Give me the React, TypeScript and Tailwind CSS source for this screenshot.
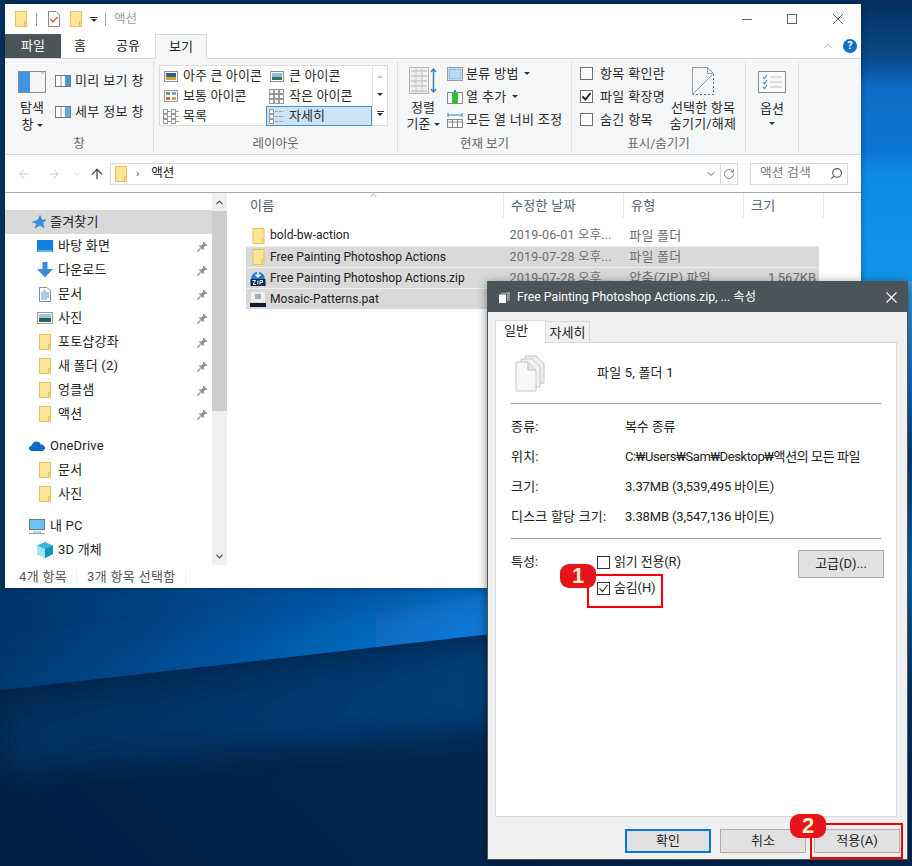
import { ChevronDown, ChevronUp, ArrowLeft, ArrowRight, ArrowUp, RotateCw, Search } from 'lucide-react';

function Wallpaper() {
  return (
    <svg className="absolute inset-0" width="912" height="866" viewBox="0 0 912 866">
      <defs>
        <linearGradient id="base" x1="0" y1="1" x2="1" y2="0">
          <stop offset="0" stopColor="#001f42" />
          <stop offset="0.6" stopColor="#002d5b" />
          <stop offset="1" stopColor="#01325f" />
        </linearGradient>
        <linearGradient id="sky" x1="0" y1="0" x2="1" y2="0">
          <stop offset="0" stopColor="#00346a" />
          <stop offset="0.3" stopColor="#004d96" />
          <stop offset="0.55" stopColor="#0560b4" />
          <stop offset="1" stopColor="#0a78d2" />
        </linearGradient>
        <linearGradient id="beam" x1="0" y1="0" x2="1" y2="0">
          <stop offset="0" stopColor="#003a72" />
          <stop offset="0.25" stopColor="#0053a0" />
          <stop offset="0.5" stopColor="#0a78d4" />
          <stop offset="1" stopColor="#0a86dc" />
        </linearGradient>
        <linearGradient id="right" x1="0" y1="0" x2="0" y2="1">
          <stop offset="0" stopColor="#032f5c" />
          <stop offset="0.2" stopColor="#0a4a8c" />
          <stop offset="0.29" stopColor="#0b6cc4" />
          <stop offset="0.5" stopColor="#0b76d2" />
          <stop offset="0.58" stopColor="#0d8ce6" />
          <stop offset="1" stopColor="#1494ea" />
        </linearGradient>
        <linearGradient id="edge" x1="0" y1="0" x2="0" y2="1">
          <stop offset="0" stopColor="#3aa0e0" />
          <stop offset="0.2" stopColor="#0a6ac0" />
          <stop offset="0.3" stopColor="#00407c" />
          <stop offset="0.5" stopColor="#0a6ab4" />
          <stop offset="0.72" stopColor="#00305f" />
          <stop offset="1" stopColor="#002a55" />
        </linearGradient>
        <linearGradient id="lower" x1="0" y1="0" x2="1" y2="0.3">
          <stop offset="0" stopColor="#00264e" />
          <stop offset="0.6" stopColor="#003c74" />
          <stop offset="1" stopColor="#004482" />
        </linearGradient>
        <clipPath id="above"><polygon points="0,0 912,0 912,566 490,634 0,690" /></clipPath>
        <filter id="softer"><feGaussianBlur stdDeviation="14" /></filter>
        <filter id="glow"><feGaussianBlur stdDeviation="16" /></filter>
      </defs>
      <rect width="912" height="866" fill="url(#base)" />
      <polygon points="0,700 490,640 912,580 912,690 0,770" fill="url(#lower)" filter="url(#softer)" />
      <g clipPath="url(#above)">
        <rect x="0" y="300" width="912" height="420" fill="url(#sky)" />
        <polygon points="0,725 0,665 420,605 912,535 912,600 490,668" fill="url(#beam)" filter="url(#glow)" />
      </g>
      <rect x="861" y="0" width="51" height="300" fill="url(#right)" />
      <rect x="908" y="281" width="4" height="585" fill="url(#edge)" />
      <rect x="0" y="0" width="912" height="4" fill="#03305c" />
      <rect x="0" y="0" width="5" height="590" fill="#03335f" />
    </svg>
  );
}

function Folder({ className = 'w-[12px] h-[16px]' }: { className?: string }) {
  return (
    <svg className={className} viewBox="0 0 12 16">
      <rect x="0.5" y="0.5" width="11" height="15" fill="#ffe596" stroke="#e6c25f" />
      <path d="M9.5 15.5V10.5H11.5" fill="#f8d774" stroke="#e6c25f" />
    </svg>
  );
}

function Pin() {
  return (
    <svg className="w-[11px] h-[11px]" viewBox="0 0 11 11">
      <path d="M6.5 0.5L10.5 4.5L9.5 5L8.5 4.7L6.6 6.6L6.6 8.4L5.8 9L2 5.2L2.6 4.4L4.4 4.4L6.3 2.5L6 1.5Z" fill="#8d8f91" />
      <path d="M3.5 7.5L0.5 10.5" stroke="#8d8f91" strokeWidth="1.2" />
    </svg>
  );
}

function MiniIcon({ kind }: { kind: string }) {
  if (kind === 'picture' || kind === 'xl') {
    return (
      <svg className="w-[14px] h-[11px]" viewBox="0 0 14 11">
        <rect x="0.5" y="0.5" width="13" height="10" fill="#fff" stroke="#8e8e8e" />
        <rect x="2" y="2" width="10" height="7" fill={kind === 'xl' ? '#2d5f9a' : '#8fbdd8'} />
        <rect x="2" y="6" width="10" height="3" fill={kind === 'xl' ? '#d9a520' : '#3c6b5c'} />
      </svg>
    );
  }
  if (kind === 'medium') {
    return (
      <svg className="w-[14px] h-[12px]" viewBox="0 0 14 12">
        <rect x="0.5" y="0.5" width="13" height="11" fill="#fff" stroke="#9a9a9a" />
        <rect x="2" y="2" width="4" height="3" fill="#6f9a70" />
        <rect x="8" y="2" width="4" height="3" fill="#7aa3c9" />
        <rect x="2" y="7" width="4" height="3" fill="#c96a4a" />
        <rect x="8" y="7" width="4" height="3" fill="#c9a84a" />
      </svg>
    );
  }
  const dots = kind === 'small'
    ? [0, 1, 2].flatMap((r) => [0, 1, 2].map((c) => [c * 5 + 1, r * 5 + 1]))
    : kind === 'list'
      ? [0, 1, 2].flatMap((r) => [0, 1].map((c) => [c * 8 + 1, r * 5 + 1]))
      : [0, 1, 2].map((r) => [1, r * 5 + 1]);
  return (
    <svg className="w-[16px] h-[15px]" viewBox="0 0 16 15">
      {dots.map(([x, y], i) => (
        <g key={i}>
          <rect x={x - 0.5} y={y - 0.5} width="4" height="4" fill="#fff" stroke="#9a9a9a" />
          {kind === 'list' && <path d={`M${x + 4} ${y + 1.5}h3`} stroke="#9a9a9a" />}
        </g>
      ))}
      {kind === 'detail' && [1, 6, 11].map((y) => <path key={y} d={`M6 ${y + 1.5}h9`} stroke="#9a9a9a" strokeDasharray="3 1" />)}
    </svg>
  );
}

function Caret({ className = '' }: { className?: string }) {
  return <span className={`inline-block w-0 h-0 border-x-[3px] border-x-transparent border-t-[3px] border-t-[#333] align-middle ${className}`} />;
}

function GroupLabel({ children }: { children: string }) {
  return <div className="absolute bottom-[-1px] left-0 right-0 text-center text-[12.5px] leading-[18px] text-[#666]">{children}</div>;
}

function Gallery({ icon, label, selected }: { icon: string; label: string; selected?: boolean }) {
  return (
    <div className={`w-[106px] h-[20px] flex items-center pl-[2px] gap-[4px] border whitespace-nowrap ${selected ? 'bg-[#cce4f7] border-[#4a90c8]' : 'border-transparent'}`}>
      <span className="w-[16px] flex justify-center"><MiniIcon kind={icon} /></span>
      <span className="tracking-[0.1px]">{label}</span>
    </div>
  );
}

function RibbonCheck({ label, checked }: { label: string; checked?: boolean }) {
  return (
    <div className="flex items-center h-[23px] gap-[7px]">
      <span className="w-[13px] h-[13px] border border-[#707070] bg-white flex items-center justify-center">
        {checked && (
          <svg className="w-[11px] h-[11px]" viewBox="0 0 11 11"><path d="M1.5 5.5L4.5 8.5L9.5 2" fill="none" stroke="#222" strokeWidth="2" /></svg>
        )}
      </span>
      <span className="tracking-[0.35px]">{label}</span>
    </div>
  );
}

function Ribbon() {
  return (
    <div className="h-[97px] bg-[#f5f6f7] border-y border-[#dadbdc] flex text-[13px] leading-[18px] text-[#2b2b2b]">
      <div className="relative w-[149px] border-r border-[#e2e3e4] my-[2px] flex pl-[12px] pt-[10px]">
        <div className="w-[30px] flex flex-col items-center">
          <svg className="w-[28px] h-[22px]" viewBox="0 0 28 22">
            <rect x="0.5" y="0.5" width="27" height="21" fill="#f4f4f4" stroke="#8c8c8c" />
            <rect x="1" y="1" width="11" height="20" fill="#3f93e0" />
            <path d="M23 2h3" stroke="#aaa" />
          </svg>
          <div className="mt-[6px] text-center leading-[17px] whitespace-nowrap">탐색<br />창 <Caret /></div>
        </div>
        <div className="ml-[8px] flex flex-col gap-[12px]">
          {['미리 보기 창', '세부 정보 창'].map((t, i) => (
            <div key={t} className="flex items-center gap-[4px] h-[19px]">
              <svg className="w-[16px] h-[12px]" viewBox="0 0 16 12">
                <rect x="0.5" y="0.5" width="15" height="11" fill="#fff" stroke="#777" />
                <path d="M6 1v10" stroke="#999" />
                <rect x="10" y="1" width="5" height="10" fill={i === 0 ? '#4a97de' : '#6aa9e0'} />
              </svg>
              <span className="tracking-[0.35px]">{t}</span>
            </div>
          ))}
        </div>
        <GroupLabel>창</GroupLabel>
      </div>
      <div className="relative w-[244px] border-r border-[#e2e3e4] my-[2px] pl-[5px] pt-[4px]">
        <div className="w-[229px] h-[61px] border border-[#dcdcdc] bg-white flex">
          <div className="grid grid-cols-[106px_106px] grid-rows-[20px_20px_20px]">
            <Gallery icon="xl" label="아주 큰 아이콘" />
            <Gallery icon="picture" label="큰 아이콘" />
            <Gallery icon="medium" label="보통 아이콘" />
            <Gallery icon="small" label="작은 아이콘" />
            <Gallery icon="list" label="목록" />
            <Gallery icon="detail" label="자세히" selected />
          </div>
          <div className="flex-1 border-l border-[#e6e6e6] flex flex-col items-center justify-around py-[2px]">
            <Caret className="rotate-180 opacity-30" />
            <Caret />
            <span className="flex flex-col items-center gap-[1px]"><span className="w-[7px] h-px bg-[#333]" /><Caret /></span>
          </div>
        </div>
        <GroupLabel>레이아웃</GroupLabel>
      </div>
      <div className="relative w-[174px] border-r border-[#e2e3e4] my-[2px] flex pl-[11px] pt-[6px]">
        <div className="w-[28px] flex flex-col items-center">
          <svg className="w-[28px] h-[28px] shrink-0" viewBox="0 0 28 28">
            <rect x="0.5" y="0.5" width="19" height="26" fill="#f1f1f1" stroke="#b5b5b5" />
            {[4, 9, 14, 19, 24].map((y) => <path key={y} d={`M2 ${y}h16`} stroke="#b0b0b0" />)}
            <path d="M7 1v25M13 1v25" stroke="#c9c9c9" />
            <path d="M24.5 2v23M22 5l2.5-3 2.5 3M22 22l2.5 3 2.5-3" fill="none" stroke="#2f80c8" strokeWidth="1.4" />
          </svg>
          <div className="mt-[5px] text-center leading-[16px] whitespace-nowrap">정렬<br />기준 <Caret /></div>
        </div>
        <div className="ml-[10px] mt-[-5px] flex flex-col">
          <div className="flex items-center h-[23px] gap-[3px] whitespace-nowrap">
            <svg className="w-[16px] h-[14px]" viewBox="0 0 16 14"><rect x="0.5" y="0.5" width="15" height="13" fill="#fff" stroke="#999" /><rect x="2" y="2" width="12" height="10" fill="#b6d9f5" stroke="#7fb2dc" /></svg>
            <span className="tracking-[0.35px]">분류 방법</span><Caret className="ml-[2px]" />
          </div>
          <div className="flex items-center h-[23px] gap-[3px] whitespace-nowrap">
            <svg className="w-[16px] h-[14px]" viewBox="0 0 16 14"><rect x="0.5" y="2.5" width="15" height="11" fill="#fff" stroke="#888" /><rect x="5" y="3" width="6" height="10" fill="#2bc232" /><path d="M8 0v2" stroke="#2f80c8" strokeWidth="2" /></svg>
            <span className="tracking-[0.35px]">열 추가</span><Caret className="ml-[2px]" />
          </div>
          <div className="flex items-center h-[23px] gap-[3px] whitespace-nowrap">
            <svg className="w-[16px] h-[16px]" viewBox="0 0 16 16"><path d="M1 3h14M1 1v4M15 1v4" fill="none" stroke="#2f80c8" /><rect x="0.5" y="7.5" width="15" height="8" fill="#fff" stroke="#888" /><path d="M0 10h16M5.5 8v7M10.5 8v7" stroke="#888" /></svg>
            <span className="tracking-[0.3px]">모든 열 너비 조정</span>
          </div>
        </div>
        <GroupLabel>현재 보기</GroupLabel>
      </div>
      <div className="relative w-[174px] border-r border-[#e2e3e4] my-[2px] flex pl-[8px] pt-[1px]">
        <div className="flex flex-col">
          <RibbonCheck label="항목 확인란" />
          <RibbonCheck label="파일 확장명" checked />
          <RibbonCheck label="숨긴 항목" />
        </div>
        <div className="absolute left-[98px] top-[6px] w-[66px] flex flex-col items-center">
          <svg className="w-[22px] h-[28px] shrink-0" viewBox="0 0 22 28">
            <path d="M0.5 27.5V0.5H15.5L21.5 6.5" fill="none" stroke="#9a9a9a" />
            <path d="M15.5 0.5V6.5H21.5" fill="none" stroke="#9a9a9a" />
            <path d="M0.5 27.5L20 8" stroke="#9a9a9a" />
            <path d="M21.5 7V27.5H1" fill="none" stroke="#2f80c8" strokeDasharray="2 2" />
          </svg>
          <div className="mt-[5px] text-center leading-[16px] whitespace-nowrap tracking-[0.2px]">선택한 항목<br />숨기기/해제</div>
        </div>
        <GroupLabel>표시/숨기기</GroupLabel>
      </div>
      <div className="relative w-[53px] border-r border-[#e2e3e4] my-[2px] flex flex-col items-center pt-[10px]">
        <svg className="w-[28px] h-[22px] shrink-0" viewBox="0 0 28 22">
          <rect x="0.5" y="0.5" width="27" height="21" fill="#fafafa" stroke="#8c8c8c" />
          {[6, 11, 16].map((y) => (
            <g key={y}>
              <path d={`M5 ${y}l1.5 1.5L9 ${y - 2}`} fill="none" stroke="#3a8fd8" strokeWidth="1.2" />
              <path d={`M12 ${y}h12`} stroke="#bbb" />
            </g>
          ))}
        </svg>
        <div className="mt-[7px] leading-[17px]">옵션</div>
        <Caret className="mt-[5px]" />
      </div>
    </div>
  );
}

const favorites = ['포토샵강좌', '새 폴더 (2)', '엉클샘', '액션'];

function NavRow({ icon, label, pin, indent = true, selected }: { icon: React.ReactNode; label: string; pin?: boolean; indent?: boolean; selected?: boolean }) {
  return (
    <div className={`h-[24px] flex items-center ${indent ? 'pl-[32px]' : 'pl-[24px]'} pr-[4px] ${selected ? 'bg-[#d9d9d9]' : ''}`}>
      <span className="w-[16px] h-[16px] flex items-center justify-center shrink-0">{icon}</span>
      <span className="ml-[5px] flex-1 tracking-[0.2px] whitespace-nowrap">{label}</span>
      {pin && <Pin />}
    </div>
  );
}

function Sidebar() {
  return (
    <div className="w-[207px] pt-[17px] text-[13px] text-[#222]">
      <NavRow
        indent={false}
        selected
        label="즐겨찾기"
        icon={
          <svg className="w-[14px] h-[14px] ml-[4px] shrink-0" viewBox="0 0 14 14"><path d="M8 0.5L9.8 5H14L10.6 7.8L12 13L8 10L3 13L4.8 8.4L0.5 7L5.8 5.2Z" fill="#2f8fe0" stroke="#1b6fb8" strokeWidth="0.5" /></svg>
        }
      />
      <NavRow
        pin
        label="바탕 화면"
        icon={<svg className="w-[16px] h-[12px]" viewBox="0 0 16 12"><rect width="16" height="12" fill="#0f7fe0" /><path d="M1 11h14" stroke="#bfe0f8" /></svg>}
      />
      <NavRow
        pin
        label="다운로드"
        icon={<svg className="w-[16px] h-[16px]" viewBox="0 0 16 16"><path d="M5.5 0h5v7H16L8 15.5L0 7h5.5Z" fill="#3a8bdc" /></svg>}
      />
      <NavRow
        pin
        label="문서"
        icon={<svg className="w-[12px] h-[15px]" viewBox="0 0 12 15"><path d="M0.5 0.5H8L11.5 4V14.5H0.5Z" fill="#fff" stroke="#8a8a8a" /><path d="M2 6h8M2 8h8M2 10h8M2 12h6M4 4h3" stroke="#4a9ad6" /></svg>}
      />
      <NavRow
        pin
        label="사진"
        icon={<svg className="w-[16px] h-[12px]" viewBox="0 0 16 12"><rect x="0.5" y="0.5" width="15" height="11" fill="#fff" stroke="#999" /><rect x="2" y="2" width="12" height="4" fill="#9cc6dc" /><rect x="2" y="6" width="12" height="4" fill="#2f5f58" /></svg>}
      />
      {favorites.map((f) => <NavRow key={f} pin label={f} icon={<Folder />} />)}
      <div className="h-[8px]" />
      <NavRow
        indent={false}
        label="OneDrive"
        icon={<svg className="w-[16px] h-[10px] shrink-0" viewBox="0 0 16 10"><path d="M3 10C1 10 0 8.6 0 7.3C0 5.8 1.2 4.8 2.6 4.7C3.2 2.2 5 0.5 7.5 0.5C9.6 0.5 11.2 1.7 11.8 3.6C14.2 3.6 16 5 16 7C16 8.8 14.7 10 13 10Z" fill="#0f6cc4" /></svg>}
      />
      <NavRow label="문서" icon={<Folder />} />
      <NavRow label="사진" icon={<Folder />} />
      <div className="h-[8px]" />
      <NavRow
        indent={false}
        label="내 PC"
        icon={<svg className="w-[16px] h-[15px] shrink-0" viewBox="0 0 16 15"><rect x="0.5" y="0.5" width="15" height="10" fill="#6cc3f2" stroke="#5a7f9c" /><path d="M4 13h8M0 14.5h16" stroke="#8fa3b2" /></svg>}
      />
      <NavRow
        label="3D 개체"
        icon={<svg className="w-[16px] h-[16px]" viewBox="0 0 16 16"><path d="M8 0L16 3.5V12L8 16L0 12V3.5Z" fill="#37b8d8" /><path d="M8 7L16 3.5V12L8 16Z" fill="#0f93bc" /><path d="M0 3.5L8 7V16L0 12Z" fill="#9ee4f2" /></svg>}
      />
    </div>
  );
}

function FileRow({ icon, name, date, type, size, selected }: { icon: React.ReactNode; name: string; date?: string; type?: string; size?: string; selected?: boolean }) {
  return (
    <div className={`h-[21px] flex items-center ${selected ? 'bg-[#d9d9d9] border-t border-[#efefef]' : ''}`}>
      <span className="w-[16px] ml-[4px] flex justify-center shrink-0">{icon}</span>
      <span className="ml-[4px] w-[240px] whitespace-nowrap text-[12.1px] text-[#222]">{name}</span>
      <span className="w-[120px] whitespace-nowrap text-[#6d6d6d] text-[12.5px] tracking-[0.2px]">{date}</span>
      <span className="w-[120px] whitespace-nowrap text-[#6d6d6d] tracking-[0.2px]">{type}</span>
      <span className="w-[70px] text-right text-[#6d6d6d] pr-[3px]">{size}</span>
    </div>
  );
}

function Header({ label, width, first }: { label: string; width: string; first?: boolean }) {
  return <div className={`${width} h-[25px] border-r border-[#e5e5e5] ${first ? 'pl-[19px]' : 'pl-[7px]'} flex items-center text-[#4c607a] tracking-[0.3px]`}>{label}</div>;
}

function Explorer() {
  return (
    <div className="absolute left-[5px] top-[4px] w-[856px] h-[584px] bg-white flex flex-col shadow-[0_0_6px_rgba(0,0,0,0.35)] text-[13px]">
      <div className="h-[30px] flex items-center shrink-0 relative">
        <Folder className="w-[12px] h-[16px] ml-[10px]" />
        <span className="ml-[9px] w-px h-[13px] bg-[#9a9a9a]" />
        <svg className="ml-[11px] w-[12px] h-[16px]" viewBox="0 0 12 16"><path d="M0.5 0.5H8L11.5 4V15.5H0.5Z" fill="#fff" stroke="#8a8a8a" /><path d="M2.5 8l2.5 3L9.5 6" fill="none" stroke="#d9541e" strokeWidth="1.3" /></svg>
        <Folder className="ml-[10px] w-[12px] h-[16px]" />
        <span className="ml-[8px] flex flex-col items-center gap-[1px]"><span className="w-[7px] h-px bg-[#222]" /><Caret className="border-t-[#222]" /></span>
        <span className="ml-[8px] w-px h-[13px] bg-[#9a9a9a]" />
        <span className="ml-[8px] text-[#a0a0a0] text-[12.5px]">액션</span>
        <div className="ml-auto flex items-center pr-[18px]">
          <svg className="w-[10px] h-[10px] mr-[35px]" viewBox="0 0 10 10"><path d="M0 5.5h10" stroke="#666" /></svg>
          <svg className="w-[10px] h-[10px] mr-[36px]" viewBox="0 0 10 10"><rect x="0.5" y="0.5" width="9" height="9" fill="none" stroke="#666" /></svg>
          <svg className="w-[10px] h-[10px]" viewBox="0 0 10 10"><path d="M0 0L10 10M10 0L0 10" stroke="#666" /></svg>
        </div>
      </div>
      <div className="h-[24px] flex items-stretch shrink-0 relative">
        <div className="w-[56px] bg-[#4b5459] text-white flex items-center justify-center">파일</div>
        <div className="w-[38px] flex items-center justify-center text-[#222]">홈</div>
        <div className="w-[58px] flex items-center justify-center text-[#222]">공유</div>
        <div className="ml-[-2px] w-[52px] h-[25px] bg-[#f5f6f7] border-x border-t border-[#dadbdc] z-10 flex items-center justify-center text-[#222]">보기</div>
        <div className="ml-auto flex items-center pr-[4px] gap-[8px]">
          <ChevronUp size={14} strokeWidth={1.2} className="text-[#888]" />
          <span className="w-[14px] h-[14px] rounded-full bg-[#0f6fc6] text-white text-[11px] font-bold leading-[14px] text-center">?</span>
        </div>
      </div>
      <Ribbon />
      <div className="h-[38px] flex items-center shrink-0 text-[#222] border-b border-[#a9a9a9]">
        <ArrowLeft size={14} strokeWidth={1.6} className="ml-[12px] text-[#c8c8c8]" />
        <ArrowRight size={14} strokeWidth={1.6} className="ml-[16px] text-[#c8c8c8]" />
        <ChevronDown size={10} strokeWidth={1.6} className="ml-[11px] text-[#c8c8c8]" />
        <ArrowUp size={16} strokeWidth={2} className="ml-[7px] text-[#555]" />
        <div className="ml-[5px] w-[628px] h-[22px] border border-[#d9d9d9] flex items-center">
          <Folder className="ml-[4px] w-[12px] h-[16px]" />
          <span className="ml-[9px] text-[#555] text-[11px] leading-none">›</span>
          <span className="ml-[12px] text-[12.5px]">액션</span>
          <ChevronDown size={12} strokeWidth={2} className="ml-auto mr-[3px] text-[#666]" />
          <div className="w-[17px] h-full border-l border-[#d9d9d9] flex items-center justify-center"><RotateCw size={12} strokeWidth={1.6} className="text-[#666]" /></div>
        </div>
        <div className="ml-[12px] w-[98px] h-[22px] border border-[#d9d9d9] flex items-center pl-[9px] text-[#777]">
          <span className="text-[12.5px] tracking-[0.4px]">액션 검색</span>
          <Search size={13} strokeWidth={2} className="ml-auto mr-[4px] -scale-x-100 text-[#555]" />
        </div>
      </div>
      <div className="flex-1 flex min-h-0">
        <Sidebar />
        <div className="w-[15px] bg-[#f0f0f0] flex flex-col items-center mr-[4px]">
          <div className="h-[18px] flex items-center"><ChevronUp size={11} strokeWidth={2.4} className="text-[#444]" /></div>
          <div className="w-full h-[200px] bg-[#cdcdcd]" />
          <div className="mt-auto h-[17px] flex items-center"><ChevronDown size={11} strokeWidth={2.4} className="text-[#444]" /></div>
        </div>
        <div className="flex-1 relative">
          <ChevronUp size={11} strokeWidth={1.2} className="absolute left-[137px] top-[-3px] text-[#666]" />
          <div className="flex">
            <Header first label="이름" width="w-[273px]" />
            <Header label="수정한 날짜" width="w-[120px]" />
            <Header label="유형" width="w-[120px]" />
            <Header label="크기" width="w-[80px]" />
          </div>
          <div className="mt-[7px] ml-[15px] w-[573px]">
            <FileRow icon={<Folder className="w-[13px] h-[16px]" />} name="bold-bw-action" date="2019-06-01 오후..." type="파일 폴더" />
            <FileRow selected icon={<Folder className="w-[13px] h-[16px]" />} name="Free Painting Photoshop Actions" date="2019-07-28 오후..." type="파일 폴더" />
            <FileRow
              selected
              name="Free Painting Photoshop Actions.zip"
              date="2019-07-28 오후..."
              type="압축(ZIP) 파일"
              size="1,567KB"
              icon={
                <svg className="w-[16px] h-[16px]" viewBox="0 0 16 16">
                  <path d="M1 9a7 7 0 0 1 14 0Z" fill="#1f7fd6" />
                  <path d="M8 2v4M5.5 4.5L8 7l2.5-2.5" fill="none" stroke="#fff" strokeWidth="1.4" />
                  <rect x="0.5" y="9" width="15" height="7" fill="#10264a" />
                  <path d="M2.5 10.5h3L3 14.5h3M7.8 10.5v4M10 14.5v-4h2.5v2H10" fill="none" stroke="#fff" strokeWidth="1" />
                </svg>
              }
            />
            <FileRow
              selected
              name="Mosaic-Patterns.pat"
              icon={
                <svg className="w-[16px] h-[16px]" viewBox="0 0 16 16">
                  <rect width="16" height="12" fill="#f0f0f0" stroke="#bbb" />
                  <rect x="5" y="3" width="6" height="5" fill="#aaa" />
                  <rect y="12" width="16" height="4" fill="#0e1a30" />
                </svg>
              }
            />
          </div>
        </div>
      </div>
      <div className="h-[23px] shrink-0 flex items-center text-[#555] tracking-[0.35px]">
        <span className="pl-[14px] w-[71px]">4개 항목</span>
        <span className="w-px h-[14px] bg-[#eeeeee]" />
        <span className="pl-[10px] w-[108px]">3개 항목 선택함</span>
        <span className="w-px h-[14px] bg-[#eeeeee]" />
      </div>
    </div>
  );
}

function Attr({ label, value, tight }: { label: string; value: string; tight?: boolean }) {
  return (
    <div className="h-[30px] flex items-center">
      <span className="w-[114px] whitespace-nowrap tracking-[0.2px]">{label}</span>
      <span className={`whitespace-nowrap ${tight ? 'tracking-[-0.4px]' : 'tracking-[-0.15px]'}`}>{value}</span>
    </div>
  );
}

function DialogCheck({ label, checked }: { label: string; checked?: boolean }) {
  return (
    <div className="flex items-center h-[26px] gap-[4px]">
      <span className="w-[13px] h-[13px] border border-[#333] bg-white flex items-center justify-center">
        {checked && <svg className="w-[11px] h-[11px]" viewBox="0 0 11 11"><path d="M1.5 5.5L4.5 8.5L9.5 2" fill="none" stroke="#333" strokeWidth="1.2" /></svg>}
      </span>
      <span className="whitespace-nowrap tracking-[-0.15px]">{label}</span>
    </div>
  );
}

function Btn({ label, primary, className = '' }: { label: string; primary?: boolean; className?: string }) {
  return (
    <div className={`w-[86px] h-[24px] bg-[#e1e1e1] flex items-center justify-center ${primary ? 'border-2 border-[#0078d7]' : 'border border-[#adadad]'} ${className}`}>{label}</div>
  );
}

function Badge({ n, className }: { n: string; className: string }) {
  return (
    <div className={`absolute w-[36px] h-[24px] rounded-[9px] bg-[#e8141c] text-[#fff3c8] font-bold text-[22px] leading-[24px] text-center font-['Liberation_Sans',sans-serif] ${className}`}>{n}</div>
  );
}

function Dialog() {
  return (
    <div className="absolute left-[487px] top-[281px] w-[421px] h-[579px] bg-[#f0f0f0] border border-[#4b5459] flex flex-col text-[13px] text-[#222] shadow-[0_2px_10px_rgba(0,0,0,0.45)]">
      <div className="h-[30px] shrink-0 bg-[#4b5459] text-white flex items-center pl-[10px]">
        <svg className="w-[13px] h-[13px]" viewBox="0 0 13 13">
          <path d="M4 0.5H12V10H4Z" fill="#cfd3d5" stroke="#4b5459" />
          <path d="M2.2 1.7H10V11H2.2Z" fill="#eceeef" stroke="#4b5459" />
          <path d="M0.5 3H8.5V12.5H0.5Z" fill="#fff" stroke="#4b5459" />
        </svg>
        <span className="ml-[6px] text-[12.3px] whitespace-nowrap">Free Painting Photoshop Actions.zip, ... 속성</span>
        <svg className="w-[11px] h-[11px] ml-auto mr-[10px]" viewBox="0 0 11 11"><path d="M0.5 0.5L10.5 10.5M10.5 0.5L0.5 10.5" stroke="#fff" strokeWidth="1.1" /></svg>
      </div>
      <div className="ml-[7px] mt-[8px] h-[22px] flex items-end relative z-10">
        <div className="w-[51px] h-[23px] mb-[-1px] bg-white border-x border-t border-[#d9d9d9] pl-[8px] leading-[20px]">일반</div>
        <div className="w-[44px] h-[21px] border-r border-t border-[#d9d9d9] bg-[#f0f0f0] text-center leading-[21px]">자세히</div>
      </div>
      <div className="ml-[7px] w-[402px] h-[475px] bg-white border border-[#d9d9d9] px-[15px] flex flex-col">
        <div className="h-[61px] flex items-center border-b border-[#a0a0a0]">
          <svg className="w-[30px] h-[37px] ml-[4px]" viewBox="0 0 30 37">
            <path d="M10 1H21L29 9V28H10Z" fill="#eee" stroke="#c4c4c4" />
            <path d="M6 4H17L25 12V32H6Z" fill="#f2f2f2" stroke="#c4c4c4" />
            <path d="M1 7H13L21 15V36H1Z" fill="#f7f7f7" stroke="#c8c8c8" />
            <path d="M13 7V15H21" fill="#e4e4e4" stroke="#bbb" />
          </svg>
          <span className="ml-[52px] tracking-[0.2px]">파일 5, 폴더 1</span>
        </div>
        <div className="pt-[8px] h-[135px] border-b border-[#a0a0a0]">
          <Attr label="종류:" value="복수 종류" />
          <Attr tight label="위치:" value="C:₩Users₩Sam₩Desktop₩액션의 모든 파일" />
          <Attr label="크기:" value="3.37MB (3,539,495 바이트)" />
          <Attr label="디스크 할당 크기:" value="3.38MB (3,547,136 바이트)" />
        </div>
        <div className="pt-[10px] flex">
          <span className="w-[86px] pt-[3px]">특성:</span>
          <div className="flex flex-col">
            <DialogCheck label="읽기 전용(R)" />
            <DialogCheck label="숨김(H)" checked />
          </div>
          <Btn label="고급(D)..." className="ml-auto mt-[1px] !h-[28px] -mr-[3px]" />
        </div>
      </div>
      <div className="pl-[137px] mt-[12px] flex">
        <Btn label="확인" primary />
        <Btn label="취소" className="ml-[9px]" />
        <Btn label="적용(A)" className="ml-[8px]" />
      </div>
    </div>
  );
}

export default function App() {
  return (
    <div className="relative w-[912px] h-[866px] overflow-hidden font-['Roboto','Noto_Sans_CJK_KR',sans-serif]">
      <Wallpaper />
      <Explorer />
      <Dialog />
      <div className="absolute left-[587px] top-[574px] w-[76px] h-[34px] border-2 border-[#f50000]" />
      <Badge n="1" className="left-[560px] top-[564px]" />
      <div className="absolute left-[810px] top-[823px] w-[93px] h-[36px] border-2 border-[#f50000]" />
      <Badge n="2" className="left-[790px] top-[814px]" />
    </div>
  );
}
